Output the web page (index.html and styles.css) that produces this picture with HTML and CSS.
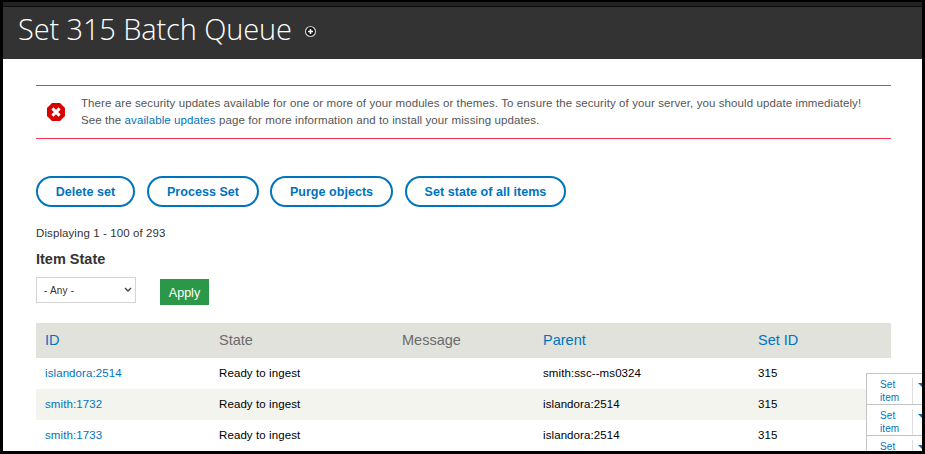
FILE: index.html
```html
<!DOCTYPE html>
<html lang="en">
<head>
<meta charset="utf-8">
<title>Set 315 Batch Queue</title>
<link rel="stylesheet" href="styles.css">
</head>
<body>
<div class="frame">
  <div class="toolbar"></div>
  <header class="branding">
    <h1>Set 315 Batch Queue</h1>
    <svg class="add" width="13" height="13" viewBox="0 0 13 13"><circle cx="6.5" cy="6.5" r="5" fill="#111" stroke="#ccc" stroke-width="1.2"/><path d="M6.5 4v5M4 6.5h5" stroke="#fff" stroke-width="1.6"/></svg>
  </header>
  <main>
    <div class="alert">
      <svg width="18" height="18" viewBox="0 0 18 18"><path d="M5 0h8l5 5v8l-5 5H5l-5-5V5z" fill="#d90000"/><path d="M5.4 5.4l7.2 7.2M12.6 5.4l-7.2 7.2" stroke="#fff" stroke-width="3"/></svg>
      <p><span class="line">There are security updates available for one or more of your modules or themes. To ensure the security of your server, you should update immediately!</span><span class="line">See the <a>available updates</a> page for more information and to install your missing updates.</span></p>
    </div>
    <nav class="actions">
      <a class="delete">Delete set</a><a class="process">Process Set</a><a class="purge">Purge objects</a><a class="state">Set state of all items</a>
    </nav>
    <p class="count">Displaying 1 - 100 of 293</p>
    <h2>Item State</h2>
    <form class="filter">
      <div class="select"><span>- Any -</span><svg width="8" height="6" viewBox="0 0 8 6"><path d="M1 1l3 3 3-3" fill="none" stroke="#444" stroke-width="1.4"/></svg></div>
      <button type="button">Apply</button>
    </form>
    <div class="table">
      <div class="row head"><a>ID</a><span>State</span><span>Message</span><a>Parent</a><a>Set ID</a></div>
      <div class="row"><a>islandora:2514</a><span>Ready to ingest</span><span></span><span>smith:ssc--ms0324</span><span>315</span><div class="drop"><a>Set<br>item</a><i></i></div></div>
      <div class="row even"><a>smith:1732</a><span>Ready to ingest</span><span></span><span>islandora:2514</span><span>315</span><div class="drop"><a>Set<br>item</a><i></i></div></div>
      <div class="row"><a>smith:1733</a><span>Ready to ingest</span><span></span><span>islandora:2514</span><span>315</span><div class="drop"><a>Set</a><i></i></div></div>
    </div>
  </main>
</div>
</body>
</html>
```
FILE: styles.css
```css
* { box-sizing: border-box; }
body, h1, h2, p { margin: 0; }
body { font-family: "Liberation Sans", sans-serif; font-size: 11.5px; letter-spacing: 0.094px; color: #333; background: #fff; }
.frame { height: 454px; border: solid #000; border-width: 2px 3px 3px; overflow: hidden; }
.toolbar { height: 5px; background: #222; border-bottom: 1px solid #0d0d0d; }
.branding { height: 52px; background: #333; display: flex; padding-left: 15px; }
h1 { font: 300 29px/44px "Open Sans", sans-serif; letter-spacing: -0.12px; color: #fff; white-space: nowrap; width: 286px; }
.add { margin-top: 18px; }
main { padding: 26px 31px 0 33px; }
a { color: #0073c0; text-decoration: none; }
.alert { height: 54px; border: solid #fa3552; border-width: 1px 0; display: flex; align-items: center; padding-left: 11px; gap: 16px; }
.alert p { color: #555; line-height: 17px; }
.line { display: block; white-space: nowrap; }
.actions { display: flex; margin-top: 37px; }
.actions a { height: 31px; border: 2px solid #0074bd; border-radius: 16px; font-weight: bold; font-size: 12.5px; letter-spacing: 0.04px; line-height: 29px; text-align: center; white-space: nowrap; }
.delete { width: 99px; margin-right: 12px; }
.process { width: 112px; margin-right: 11px; }
.purge { width: 123px; margin-right: 12px; }
.state { width: 161px; }
.count { margin-top: 18px; line-height: 16px; }
h2 { font-size: 14.5px; letter-spacing: 0; line-height: 18px; margin-top: 9px; }
.filter { display: flex; margin-top: 9px; gap: 24px; }
.select { width: 100px; height: 26px; border: 1px solid #d4d4d4; display: flex; align-items: center; justify-content: space-between; padding: 0 3px 0 7px; font-size: 10px; letter-spacing: 0.2px; }
button { width: 49px; height: 26px; margin: 2px 0 0; padding: 1px 0 0; border: 0; background: #2b9748; color: #fff; font: 12.5px "Liberation Sans", sans-serif; }
.table { margin-top: 18px; color: #000; }
.row { position: relative; display: grid; grid-template-columns: 174px 183px 141px 215px 1fr; align-items: center; height: 31px; padding: 0 0 2px 9px; }
.even { background: #f3f4ee; }
.head { height: 35px; background: #e1e2dc; color: #6b6b6b; font-size: 14.5px; letter-spacing: 0; }
.drop { position: absolute; z-index: 1; left: 830px; top: 15px; width: 70px; height: 32px; border: 1px solid #c4c4c4; background: #fff; padding: 4px 0 0 13px; font-size: 10px; line-height: 13px; }
.drop a { display: block; width: 33px; height: 26px; border-right: 1px solid #ddd; }
.drop i { position: absolute; left: 51px; top: 9px; border: 4px solid transparent; border-top-color: #0073c0; border-bottom: 0; }
```
